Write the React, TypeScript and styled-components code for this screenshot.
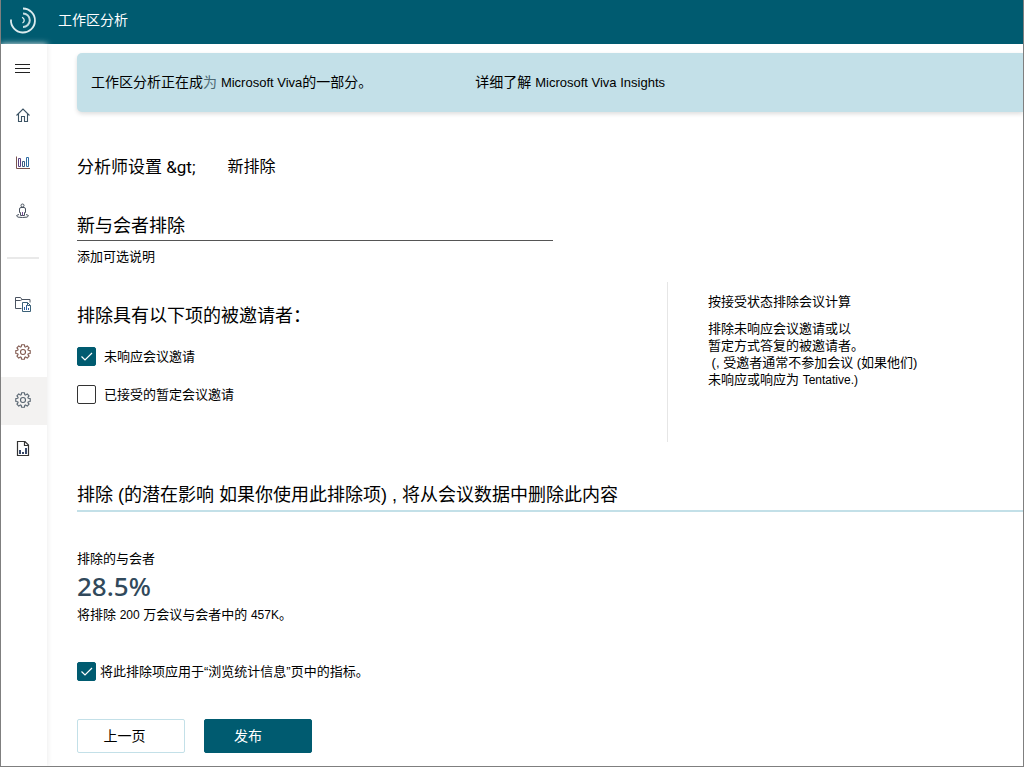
import React, { useState } from "react";
import styled, { createGlobalStyle } from "styled-components";

const teal = "#005b70";
const paleTeal = "#c3e0e8";

const GlobalStyle = createGlobalStyle`
  * { box-sizing: border-box; }
  body {
    margin: 0;
    background: #fff;
    color: #000;
    font-family: "Liberation Sans", "Noto Sans CJK SC", sans-serif;
    font-size: 13px;
    line-height: 18px;
  }
  h1, h2, h3, p { margin: 0; font-weight: 400; }
  button, input { font: inherit; color: inherit; }
`;

const Frame = styled.div`
  display: flex;
  flex-direction: column;
  min-height: 100vh;
  overflow-x: hidden;
  border: solid #7f7f7f;
  border-width: 0 1px 1px;
`;

const Header = styled.header`
  display: flex;
  align-items: center;
  gap: 21px;
  height: 44px;
  padding: 0 8px 4px;
  background: ${teal};
  color: #fff;
`;

const AppTitle = styled.h1`
  font-size: 14px;
  line-height: 20px;
`;

const Body = styled.div`
  display: flex;
  flex: 1;
`;

const Sidebar = styled.nav`
  display: flex;
  flex-direction: column;
  flex: none;
  width: 46px;
  background: #fff;
  box-shadow: 0 0 6px #e8e8e8;
`;

const NavButton = styled.button<{ $active?: boolean }>`
  display: flex;
  align-items: center;
  justify-content: center;
  height: 48px;
  padding: 0 2px 2px 0;
  border: 0;
  background: ${(p) => (p.$active ? "#f3f2f1" : "transparent")};
`;

const NavDivider = styled.hr`
  width: 32px;
  height: 2px;
  margin: 21px 6px 22px;
  border: 0;
  background: #e9e9e9;
`;

const Main = styled.main`
  flex: 1;
  min-width: 0;
  padding: 9px 0 13px 30px;
`;

const Banner = styled.aside`
  display: flex;
  align-items: center;
  gap: 103px;
  min-height: 59px;
  padding: 0 14px;
  border-radius: 5px 0 0 5px;
  background: ${paleTeal};
  box-shadow: 0 2px 4px #dedede;
  font-size: 14px;
`;

const BannerLink = styled.a`
  color: #000;
  text-decoration: none;
`;

const Latin = styled.span<{ $size: number }>`
  font-size: ${(p) => p.$size}px;
`;

const Faint = styled.span`
  color: #4d6873;
`;

const Breadcrumb = styled.nav`
  display: flex;
  gap: 32px;
  margin-top: 43px;
  font-family: Roboto, "Noto Sans CJK SC", sans-serif;
  font-size: 16px;
  line-height: 24px;
`;

const Crumb = styled.a`
  color: #000;
  font-size: 17px;
  text-decoration: none;
`;

const NameInput = styled.input`
  display: block;
  width: 100%;
  max-width: 476px;
  height: 30px;
  margin-top: 32px;
  padding: 0 0 4px;
  border: 0;
  border-bottom: 1px solid #555;
  background: transparent;
  font-size: 18px;
`;

const Description = styled.p`
  margin-top: 7px;
`;

const Columns = styled.div`
  display: grid;
  grid-template-columns: 590fr 356fr;
  margin-top: 16px;
`;

const Options = styled.fieldset`
  min-width: 0;
  margin: 0;
  padding: 22px 0 0;
  border: 0;
`;

const Legend = styled.legend`
  float: left;
  width: 100%;
  margin-bottom: 19px;
  padding: 0;
  font-size: 18px;
  line-height: 24px;
`;

const CheckLabel = styled.label<{ $gap: number }>`
  display: flex;
  clear: both;
  align-items: center;
  gap: ${(p) => p.$gap}px;
  line-height: 19px;

  & + & { margin-top: 19px; }
`;

const BoxHolder = styled.span`
  display: grid;
  width: 19px;
  height: 19px;

  & > * { grid-area: 1 / 1; }
`;

const CheckInput = styled.input`
  appearance: none;
  width: 19px;
  height: 19px;
  margin: 0;
  border: 1px solid #333;
  border-radius: 2px;
  background: #fff;

  &:checked {
    border-color: ${teal};
    background: ${teal};
  }
`;

const Tick = styled.svg`
  pointer-events: none;
`;

const Help = styled.aside`
  min-height: 160px;
  padding: 11px 20px 0 40px;
  border-left: 1px solid #e6e6e6;
  line-height: 17px;
`;

const HelpTitle = styled.h3`
  margin-bottom: 10px;
  font-size: 13px;
`;

const ImpactHeading = styled.h2`
  margin-top: 41px;
  padding-bottom: 3px;
  border-bottom: 2px solid ${paleTeal};
  font-size: 18px;
  line-height: 24px;
`;

const Metric = styled.section`
  margin: 38px 0;
`;

const MetricValue = styled.p`
  margin: 2px 0 4px;
  color: #31495b;
  font-family: "Noto Sans", sans-serif;
  font-size: 26px;
  font-weight: 500;
  line-height: 32px;
`;

const Actions = styled.div`
  display: flex;
  gap: 19px;
  margin-top: 38px;
`;

const ActionButton = styled.button<{ $primary?: boolean }>`
  width: 108px;
  height: 34px;
  padding: 0 ${(p) => (p.$primary ? 20 : 13)}px 0 0;
  border: 1px solid ${(p) => (p.$primary ? teal : paleTeal)};
  border-radius: 2px;
  background: ${(p) => (p.$primary ? teal : "#fff")};
  color: ${(p) => (p.$primary ? "#fff" : "#000")};
  font-size: 14px;
`;

const Logo = () => (
  <svg width="28" height="28" viewBox="0 0 28 28" fill="none" aria-hidden="true">
    <path d="M2 13.5A12 12 0 1 0 14 2.5" stroke="#dcebee" strokeWidth="1.8" />
    <path d="M14 7.4A6.8 6.8 0 0 1 14 21" stroke="#c3dbe1" strokeWidth="2" />
    <path d="M13 11.4A3 3 0 0 1 13.5 17" stroke="#e4f0f2" strokeWidth="1.3" />
  </svg>
);

const Icon = ({ children }: { children: React.ReactNode }) => (
  <svg
    width="16"
    height="16"
    viewBox="0 0 16 16"
    fill="none"
    stroke="#4a5360"
    strokeWidth="1"
    aria-hidden="true"
  >
    {children}
  </svg>
);

const MenuIcon = () => (
  <Icon>
    <path d="M0 5.5H15M0 9.5H15M0 13.5H15" stroke="#222" />
  </Icon>
);

const HomeIcon = () => (
  <Icon>
    <path
      d="M1.5 8.5L8 2L14.5 8.5M3.5 7V14.5H6.5V9.5H9.5V14.5H12.5V7"
      stroke="#3c5364"
      strokeWidth="1.1"
    />
  </Icon>
);

const ChartIcon = () => (
  <Icon>
    <path d="M1.5 1.5V13.5H15" stroke="#7a5450" />
    <path d="M3.5 3.5H5.5V11.5H3.5Z" stroke="#5b3f80" />
    <path d="M7.5 6.5H9.5V11.5H7.5Z" stroke="#3b5a80" />
    <path d="M11.5 2.5H13.5V11.5H11.5Z" stroke="#2f6da4" />
  </Icon>
);

const PersonIcon = () => (
  <Icon>
    <circle cx="7.5" cy="2.5" r="1.5" />
    <path d="M4.5 9.5V6Q4.5 4.5 6 4.5H9Q10.5 4.5 10.5 6V9.5H9.5V12.5H5.5V9.5Z" />
    <path d="M7.5 9V12.5" stroke="#7d4f99" />
    <path d="M4 11.5Q1.5 12 1.5 13Q1.5 14.5 7.5 14.5Q13.5 14.5 13.5 13Q13.5 12 11 11.5" />
  </Icon>
);

const FolderIcon = () => (
  <Icon>
    <path d="M6.5 12.5H.5V1.5H5.5L7 3.5H15V6.5M.5 4.5H5.5L7 3.5" />
    <path d="M7.5 6.5H12.5L15.5 9.5V15.5H7.5ZM12.5 6.5V9.5H15.5" stroke="#3b6178" />
    <path d="M9.5 11V14M11.5 9V14M13.5 12V14" stroke="#2f5f9c" />
  </Icon>
);

const GearIcon = ({ color }: { color: string }) => (
  <Icon>
    <g stroke={color} strokeWidth="1.1" strokeLinejoin="round">
      <path d="M6.5 .8H9.5L9.8 2.8L10.6 3.1L12.2 1.9L14.1 3.8L12.9 5.4L13.2 6.2L15.2 6.5V9.5L13.2 9.8L12.9 10.6L14.1 12.2L12.2 14.1L10.6 12.9L9.8 13.2L9.5 15.2H6.5L6.2 13.2L5.4 12.9L3.8 14.1L1.9 12.2L3.1 10.6L2.8 9.8L.8 9.5V6.5L2.8 6.2L3.1 5.4L1.9 3.8L3.8 1.9L5.4 3.1L6.2 2.8Z" />
      <circle cx="8" cy="8" r="2.5" />
    </g>
  </Icon>
);

const ReportIcon = () => (
  <Icon>
    <path d="M2.5 1.5H10L13.5 5V15.5H2.5ZM9.5 1.5V5.5H13.5" stroke="#333" strokeWidth="1.2" />
    <path d="M5 10V14M8 12V14M11 8V14" stroke="#24375b" strokeWidth="1.8" />
  </Icon>
);

const CheckBox = ({
  label,
  initial,
  gap = 8,
}: {
  label: string;
  initial: boolean;
  gap?: number;
}) => {
  const [checked, setChecked] = useState(initial);
  return (
    <CheckLabel $gap={gap}>
      <BoxHolder>
        <CheckInput
          type="checkbox"
          checked={checked}
          onChange={(e) => setChecked(e.target.checked)}
        />
        {checked && (
          <Tick width="19" height="19" viewBox="0 0 19 19" fill="none" aria-hidden="true">
            <path d="M4.5 9.5L8 13L15 6" stroke="#fff" strokeWidth="1.2" />
          </Tick>
        )}
      </BoxHolder>
      <span>{label}</span>
    </CheckLabel>
  );
};

export default function App() {
  const [name, setName] = useState("新与会者排除");

  return (
    <>
      <GlobalStyle />
      <Frame>
        <Header>
          <Logo />
          <AppTitle>工作区分析</AppTitle>
        </Header>
        <Body>
          <Sidebar>
            <NavButton aria-label="菜单"><MenuIcon /></NavButton>
            <NavButton aria-label="主页"><HomeIcon /></NavButton>
            <NavButton aria-label="统计"><ChartIcon /></NavButton>
            <NavButton aria-label="人员"><PersonIcon /></NavButton>
            <NavDivider />
            <NavButton aria-label="文件夹"><FolderIcon /></NavButton>
            <NavButton aria-label="设置"><GearIcon color="#80584e" /></NavButton>
            <NavButton aria-label="分析师设置" $active><GearIcon color="#56636f" /></NavButton>
            <NavButton aria-label="报告"><ReportIcon /></NavButton>
          </Sidebar>
          <Main>
            <Banner>
              <span>
                工作区分析正在成<Faint>为</Faint>{" "}
                <Latin $size={13}>Microsoft Viva</Latin>的一部分。
              </span>
              <BannerLink href="#insights">
                详细了解 <Latin $size={13}>Microsoft Viva Insights</Latin>
              </BannerLink>
            </Banner>

            <Breadcrumb>
              <Crumb href="#settings">分析师设置 &amp;gt;</Crumb>
              <span>新排除</span>
            </Breadcrumb>

            <NameInput
              aria-label="排除名称"
              value={name}
              onChange={(e) => setName(e.target.value)}
            />
            <Description>添加可选说明</Description>

            <Columns>
              <Options>
                <Legend>排除具有以下项的被邀请者：</Legend>
                <CheckBox label="未响应会议邀请" initial />
                <CheckBox label="已接受的暂定会议邀请" initial={false} />
              </Options>
              <Help>
                <HelpTitle>按接受状态排除会议计算</HelpTitle>
                <p>
                  排除未响应会议邀请或以
                  <br />
                  暂定方式答复的被邀请者。
                  <br />
                  &nbsp;(, 受邀者通常不参加会议 (如果他们)
                  <br />
                  未响应或响应为 <Latin $size={12}>Tentative.)</Latin>
                </p>
              </Help>
            </Columns>

            <ImpactHeading>
              排除 (的潜在影响 如果你使用此排除项) , 将从会议数据中删除此内容
            </ImpactHeading>

            <Metric>
              <p>排除的与会者</p>
              <MetricValue>28.5%</MetricValue>
              <p>
                将排除 <Latin $size={12}>200</Latin> 万会议与会者中的{" "}
                <Latin $size={12}>457K</Latin>。
              </p>
            </Metric>

            <CheckBox label="将此排除项应用于“浏览统计信息”页中的指标。" initial gap={4} />

            <Actions>
              <ActionButton type="button">上一页</ActionButton>
              <ActionButton type="button" $primary>发布</ActionButton>
            </Actions>
          </Main>
        </Body>
      </Frame>
    </>
  );
}
